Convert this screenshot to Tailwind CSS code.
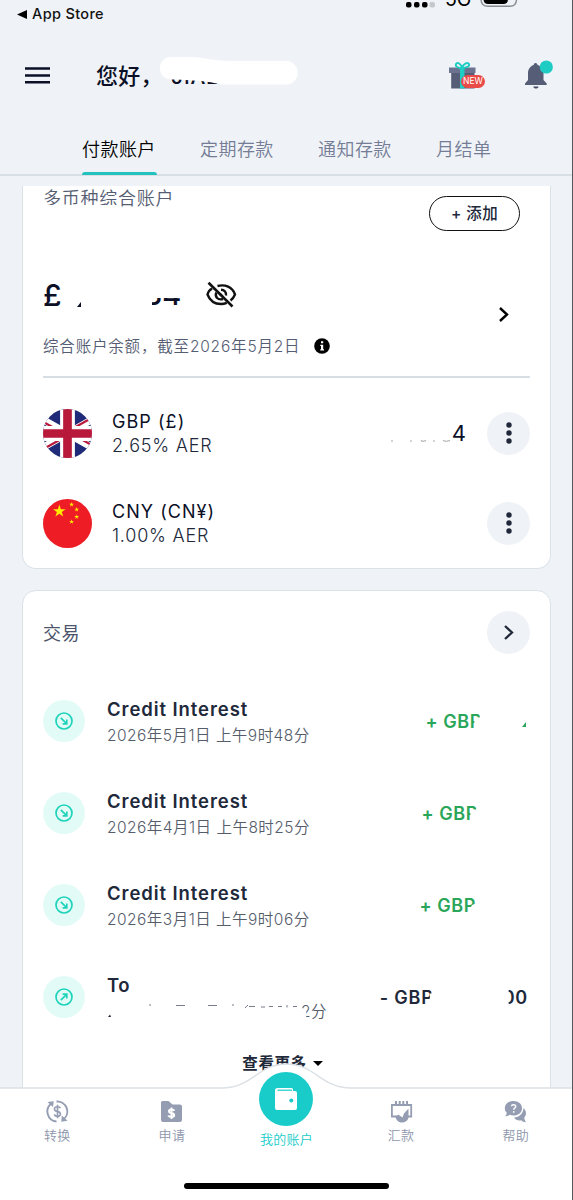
<!DOCTYPE html>
<html lang="zh-CN">
<head>
<meta charset="utf-8">
<title>我的账户</title>
<script src="https://cdn.jsdelivr.net/npm/@tailwindcss/browser@4"></script>
</head>
<body class="bg-[#eff3f7]">
<svg class="hidden">
  <defs>
    <symbol id="in" viewBox="0 0 18 18"><circle cx="9" cy="9" r="8" fill="none" stroke="#1fd3bb" stroke-width="1.7"/><path d="M5.800 5.800 11.400 11.400M11.800 7.600V11.800H7.600" fill="none" stroke="#1fd3bb" stroke-width="1.700"/></symbol>
    <symbol id="out" viewBox="0 0 18 18"><circle cx="9" cy="9" r="8" fill="none" stroke="#1fd3bb" stroke-width="1.700"/><path d="M5.800 12.200 11.400 6.600M7.600 6.200H11.800V10.400" fill="none" stroke="#1fd3bb" stroke-width="1.700"/></symbol>
    <symbol id="dots" viewBox="0 0 6 22"><circle cx="3" cy="3" r="2.700" fill="#20283a"/><circle cx="3" cy="11" r="2.700" fill="#20283a"/><circle cx="3" cy="19" r="2.700" fill="#20283a"/></symbol>
    <symbol id="star" viewBox="-1 -1 2 2"><path d="M0-1 .225-.309H.951L.363.118.588.809 0 .382-.588.809-.363.118-.951-.309H-.225Z" fill="#ffeb00"/></symbol>
  </defs>
</svg>
<div class="relative flex h-[1200px] w-[573px] flex-col overflow-hidden bg-[#eff3f7] font-['Inter','Noto_Sans_CJK_SC',sans-serif] text-[#20283a]">

  <header class="h-[176px] shrink-0 border-b-2 border-[#d8dfe5]">
    <div class="flex h-[28px] justify-between pl-[17px] pr-[54px]">
      <div class="flex h-[28px] items-center gap-[5px] text-[14.500px] font-medium tracking-[0.350px] text-[#111]">
        <svg class="h-[9px] w-[10px]" viewBox="0 0 10 9"><path d="M0 4.500 10 0V9Z" fill="#000"/></svg>
        <span>App Store</span>
      </div>
      <div class="flex h-[8px] items-start overflow-hidden">
        <svg class="mt-[1px] h-[7px] w-[30px]" viewBox="0 0 30 7"><rect x="1" y="1" width="5.500" height="5.500" rx="2"/><rect x="9" y="1" width="5.500" height="5.500" rx="2"/><rect x="17" y="1" width="5.500" height="5.500" rx="2"/><rect x="24.500" y="1" width="5.500" height="5.500" rx="2" fill="#c5c8cc"/></svg>
        <span class="-mt-[14px] ml-[10px] w-[27px] text-[19.500px] font-normal leading-[26px] text-black">5G</span>
        <svg class="ml-[8px] h-[8px] w-[39px]" viewBox="0 0 39 8"><path d="M1 -4V-1Q1 6.300 8 6.300H30Q36.500 6.300 36.500 -1V-4" fill="none" stroke="#888c91" stroke-width="1.400"/><path d="M3.500 -4V-1Q3.500 4 8 4H23.500Q28 4 28 -1V-4Z"/></svg>
      </div>
    </div>
    <div class="flex h-[97px] items-center pl-[25px] pr-[18px]">
      <svg class="-mt-[3px] h-[17px] w-[25px] shrink-0" viewBox="0 0 25 17"><path d="M0 1.500H25M0 8.500H25M0 15.300H25" stroke="#0b1027" stroke-width="2.500"/></svg>
      <div class="relative ml-[46px] flex w-[210px] items-center whitespace-nowrap text-[22px] font-medium tracking-[0.300px] text-[#0b1027]">
        <span>您好，</span>
        <span class="absolute left-[75px] top-[1px] text-[21px] tracking-[0.800px]">JIAL</span>
        <svg class="absolute left-[64px] -top-[3px] h-[28px] w-[138px]" viewBox="0 0 138 28"><path d="M11 0H32C48 1 54 4 70 4H126A11.700 11.700 0 0 1 126 27.500H62C50 25 40 23 11 22.500A11 11 0 0 1 11 0Z" fill="#fff"/></svg>
      </div>
      <div class="relative -mt-[3px] ml-auto flex">
        <svg class="h-[30px] w-[37px]" viewBox="0 0 37 30"><path d="M2.200 12H25.500V28.500H2.200Z" fill="#555d77"/><path d="M0 7.500H26.500V13H0Z" fill="#6b7390"/><path d="M11 8H15.500V28.500H11Z" fill="#1fccc4"/><path d="M13 8C9 8 6 6.500 7 4 8.500 1.500 12 4 13 8ZM13 8C17 8 21 6.500 20 4 18.500 1.500 14 4 13 8Z" fill="none" stroke="#1fccc4" stroke-width="1.900"/></svg>
        <span class="absolute left-[12px] top-[15px] flex h-[13px] w-[24px] items-center justify-center rounded-full bg-[#e94b48] text-[8.500px] tracking-[0.100px] text-white">NEW</span>
      </div>
      <svg class="-mt-[4px] ml-[39px] h-[30px] w-[30px]" viewBox="0 0 30 30"><path d="M10.500 3C11.500 3 12.500 3.800 12.500 5 17 6.300 18.500 9.500 18.500 13V20L21.700 23.500V25H0V23.500L3 20V13C3 9.500 5 6.300 8.700 5 8.700 3.800 9.500 3 10.500 3Z" fill="#555d77"/><path d="M8.300 26.500H13.500C13.200 29.300 8.700 29.300 8.300 26.500Z" fill="#434b65"/><circle cx="21.300" cy="7" r="6.600" fill="#1fccc4"/></svg>
    </div>
    <nav class="flex h-[50px] gap-[44px] pl-[82px] text-[18px] font-[350] tracking-[0.450px] text-[#747c96]">
      <div class="relative h-[50px] w-[74px] whitespace-nowrap leading-[50px] text-black">付款账户<div class="absolute bottom-0 left-0 h-[3px] w-[75px] rounded-t bg-[#22c3bf]"></div></div>
      <div class="w-[74px] whitespace-nowrap leading-[50px]">定期存款</div>
      <div class="w-[74px] whitespace-nowrap leading-[50px]">通知存款</div>
      <div class="whitespace-nowrap leading-[50px]">月结单</div>
    </nav>
  </header>

  <main class="h-[912px] shrink-0 overflow-hidden px-[22px] pt-[10px]">
    <section class="h-[383px] rounded-b-[14px] border border-t-0 border-[#dae2e8] bg-white px-[20px]">
      <div class="flex h-[44px] items-start justify-between">
        <div class="relative text-[18px] font-[350] leading-[26px] tracking-[0.750px] text-[#555d73]">多币种综合账户
          <div class="absolute left-0 top-[19px] h-[8px] w-[74px] bg-white"></div>
        </div>
        <div class="mr-[10px] mt-[10px] flex h-[35px] w-[91px] items-center justify-center rounded-full border-[1.500px] border-[#111] text-[15.500px] font-medium tracking-[0.400px]">+ 添加</div>
      </div>
      <div class="mt-[50px] flex justify-between">
        <div>
          <div class="flex h-[30px] items-center text-[30px] font-medium text-[#0b1027]">
            <span class="w-[34px] leading-[30px]">£</span>
            <svg class="mt-[19px] h-[5px] w-[5px]" viewBox="0 0 5 5"><path d="M0 5 4 0V5Z" fill="#0b1027"/></svg>
            <span class="ml-[62px] w-[42px] text-[29px] leading-[30px] [clip-path:inset(18px_0_0_8px)]">34</span>
            <svg class="ml-[20px] h-[28px] w-[31px]" viewBox="0 0 31 28"><g fill="none" stroke="#111" stroke-width="2.400"><path d="M6 7.500C3.500 9 2 11.500 1.500 13.500 4 20 9.500 23 15 23 17 23 19 22.600 20.800 21.900M11.500 5C19 3 26.500 6 29 13.500 28 16 26.500 18 24.500 19.500"/><path d="M10.300 11.500C8.500 16 12 19.500 17 18M15 8.700C18.500 8.800 20.500 11.500 20 14.500M13.500 12.500 16.500 15.500"/><path d="M2.500 1.800 26.500 25.500" stroke-width="2.600"/></g></svg>
          </div>
          <div class="mt-[24px] flex h-[24px] items-center text-[15.500px] font-[350] tracking-[0.820px] text-[#555d73]">
            <span class="w-[271px] whitespace-nowrap pt-[2px]">综合账户余额，截至2026年5月2日</span>
            <svg class="h-[16px] w-[16px]" viewBox="0 0 16 16"><circle cx="8" cy="8" r="7.800" fill="#000"/><path d="M7 3.200H9.200V5.200H7ZM6.300 6.700H9.200V11.300H10V12.500H6.300V11.300H7V7.900H6.300Z" fill="#fff"/></svg>
          </div>
        </div>
        <svg class="mr-[20px] mt-[26px] h-[17px] w-[12px]" viewBox="0 0 12 17"><path d="M2 2 9 8.500 2 15" fill="none" stroke="#000" stroke-width="2.400"/></svg>
      </div>
      <div class="mt-[18px] h-[2px] bg-[#d7dfe5]"></div>
      <div class="mt-[10px] flex h-[90px] items-center">
        <svg class="h-[49px] w-[49px]" viewBox="0 0 48 48"><clipPath id="c"><circle cx="24" cy="24" r="24"/></clipPath><g clip-path="url(#c)"><path fill="#1f2a78" d="M0 0H48V48H0Z"/><path d="M-8 6 56 42M56 6-8 42" stroke="#fff" stroke-width="7"/><path d="M-8 8 24 26M24 22 56 40M56 4 24 22M24 26-8 44" stroke="#b8193b" stroke-width="2.200"/><path d="M24 0V48M0 24H48" stroke="#fff" stroke-width="14.500"/><path d="M24 0V48M0 24H48" stroke="#b8193b" stroke-width="8.500"/></g></svg>
        <div class="ml-[20px] pt-[2px] text-[18px] leading-[24px] tracking-[1.050px]">
          <div class="font-normal text-[#0b1027]">GBP (£)</div>
          <div class="font-[350] tracking-[0.780px] text-[#20283a]">2.65% AER</div>
        </div>
        <div class="relative ml-auto w-[80px] text-right text-[22px] font-normal text-[#0b1027]">
          <svg class="absolute left-[4px] top-[22px] h-[4px] w-[64px]" viewBox="0 0 64 4"><path d="M1 2H3M20 2H22M31 1.500Q33 3 36 1.500M43 2H45M53 1.500Q56 3 60 1.500" fill="none" stroke="#aaa" stroke-width="1.200"/></svg>4</div>
        <div class="ml-[21px] flex h-[43px] w-[43px] items-center justify-center rounded-full bg-[#eff2f6]"><svg class="h-[22px] w-[6px]"><use href="#dots"/></svg></div>
      </div>
      <div class="flex h-[90px] items-center">
        <svg class="h-[49px] w-[49px]" viewBox="0 0 48 48"><circle cx="24" cy="24" r="24" fill="#ee1c25"/><use href="#star" x="9.500" y="5.500" width="13" height="13"/><use href="#star" x="25.500" y="3" width="5" height="5"/><use href="#star" x="30.500" y="7.800" width="5" height="5"/><use href="#star" x="30.500" y="15" width="5" height="5"/><use href="#star" x="25.500" y="19.800" width="5" height="5"/></svg>
        <div class="ml-[20px] pt-[2px] text-[18px] leading-[24px] tracking-[1.050px]">
          <div class="font-normal text-[#0b1027]">CNY (CN¥)</div>
          <div class="font-[350] tracking-[0.780px] text-[#20283a]">1.00% AER</div>
        </div>
        <div class="ml-auto flex h-[43px] w-[43px] items-center justify-center rounded-full bg-[#eff2f6]"><svg class="h-[22px] w-[6px]"><use href="#dots"/></svg></div>
      </div>
    </section>

    <section class="mt-[21px] h-[520px] rounded-t-[14px] border border-[#dae2e8] bg-white px-[20px] pt-[20px]">
      <div class="flex h-[43px] items-center justify-between text-[18px] font-normal tracking-[0.500px] text-[#4b546c]">
        <span class="pt-[2px]">交易</span>
        <div class="flex h-[43px] w-[43px] items-center justify-center rounded-full bg-[#eff2f6]"><svg class="h-[17px] w-[12px]" viewBox="0 0 12 17"><path d="M2 2 9 8.500 2 15" fill="none" stroke="#20283a" stroke-width="2.300"/></svg></div>
      </div>
      <div class="mt-[21px] flex h-[92px] items-center">
        <div class="flex h-[42px] w-[42px] items-center justify-center rounded-full bg-[#e3fbf7]"><svg class="h-[18px] w-[18px]"><use href="#in"/></svg></div>
        <div class="ml-[22px] whitespace-nowrap pt-[3px]"><div class="pb-[2px] text-[18.500px] font-semibold leading-[24px] tracking-[0.920px]">Credit Interest</div><div class="text-[15.500px] font-[350] leading-[26px] tracking-[0.480px] text-[#555d6b]">2026年5月1日 上午9时48分</div></div>
        <div class="ml-auto flex items-center text-[18px] font-semibold tracking-[0.600px] text-[#2aa65a]"><span class="[clip-path:polygon(0_0,96%_0,96%_37%,86.500%_37%,86.500%_100%,0_100%)]">+ GBP</span><svg class="ml-[40px] mr-[4px] mt-[7px] h-[5px] w-[4px]" viewBox="0 0 4 5"><path d="M0 5 4 0V5Z" fill="#2aa65a"/></svg></div>
      </div>
      <div class="flex h-[92px] items-center">
        <div class="flex h-[42px] w-[42px] items-center justify-center rounded-full bg-[#e3fbf7]"><svg class="h-[18px] w-[18px]"><use href="#in"/></svg></div>
        <div class="ml-[22px] whitespace-nowrap pt-[3px]"><div class="pb-[2px] text-[18.500px] font-semibold leading-[24px] tracking-[0.920px]">Credit Interest</div><div class="text-[15.500px] font-[350] leading-[26px] tracking-[0.480px] text-[#555d6b]">2026年4月1日 上午8时25分</div></div>
        <div class="ml-auto mr-[52px] text-[18px] font-semibold tracking-[0.600px] text-[#2aa65a]"><span class="inline-block [clip-path:polygon(0_0,97%_0,97%_37%,86.500%_37%,86.500%_100%,0_100%)]">+ GBP</span></div>
      </div>
      <div class="flex h-[92px] items-center">
        <div class="flex h-[42px] w-[42px] items-center justify-center rounded-full bg-[#e3fbf7]"><svg class="h-[18px] w-[18px]"><use href="#in"/></svg></div>
        <div class="ml-[22px] whitespace-nowrap pt-[3px]"><div class="pb-[2px] text-[18.500px] font-semibold leading-[24px] tracking-[0.920px]">Credit Interest</div><div class="text-[15.500px] font-[350] leading-[26px] tracking-[0.480px] text-[#555d6b]">2026年3月1日 上午9时06分</div></div>
        <div class="ml-auto mr-[54px] text-[18px] font-semibold tracking-[0.600px] text-[#2aa65a]"><span class="inline-block [clip-path:polygon(0_0,100%_0,100%_44%,93%_50%,90%_62%,86.500%_70%,86.500%_100%,0_100%)]">+ GBP</span></div>
      </div>
      <div class="flex h-[92px] items-center">
        <div class="flex h-[42px] w-[42px] items-center justify-center rounded-full bg-[#e3fbf7]"><svg class="h-[18px] w-[18px]"><use href="#out"/></svg></div>
        <div class="ml-[22px] whitespace-nowrap pt-[3px]"><div class="pb-[2px] text-[18.500px] font-semibold leading-[24px] tracking-[0.500px]">To</div>
          <div class="relative h-[26px] w-[220px] text-right text-[15.500px] font-[350] leading-[26px] tracking-[0.480px] text-[#555d6b]"><span class="inline-block [clip-path:polygon(0_0,100%_0,100%_100%,20%_100%,20%_42%,0_42%)]">2分</span>
            <svg class="absolute left-0 top-[3px] h-[16px] w-[200px]" viewBox="0 0 200 16"><path d="M1 15 3 12.500 4 15Z" fill="#20283a"/><path d="M42 3H44M69 3.500H78M101 3.500H110M125 3H127M138 6 141 3M142 4.500H148M154 5H158M162 4.500H166M171 4.500H175M180 3V5.500M186 4.500H190" fill="none" stroke="#777d8a" stroke-width="1"/></svg></div></div>
        <div class="ml-auto mr-[2px] flex text-[18px] font-semibold tracking-[0.800px]"><span class="[clip-path:polygon(0_0,96%_0,96%_37%,93%_37%,93%_58%,86%_58%,86%_100%,0_100%)]">- GBP</span><span class="ml-[69px] [clip-path:inset(0_0_0_6px)]">00</span></div>
      </div>
      <div class="flex h-[38px] items-center justify-center gap-[6px] pr-[8px] pt-[3px] text-[15.500px] font-bold tracking-[0.600px]"><span>查看更多</span><svg class="h-[5px] w-[10px]" viewBox="0 0 10 5"><path d="M0 0H10L5 5Z" fill="#000"/></svg></div>
    </section>
  </main>

  <footer class="relative h-[112px] shrink-0 bg-white">
    <svg class="absolute left-0 -top-[26px] h-[28px] w-[573px]" viewBox="0 0 573 28"><path d="M0 26H222C252 26 258 2 286.500 2S321 26 351 26H573V28H0Z" fill="#fff"/><path d="M0 26H222C252 26 258 2 286.500 2S321 26 351 26H573" fill="none" stroke="#dce1e5" stroke-width="1.500"/></svg>
    <div class="relative grid grid-cols-5 text-center text-[13px] font-[350] tracking-[0.300px] text-[#8e96ab]">
      <div class="flex flex-col items-center pt-[12px]">
        <svg class="h-[23px] w-[23px]" viewBox="0 0 23 23"><g fill="none" stroke="#959db2" stroke-width="1.900"><path d="M5.500 3.500A10 10 0 0 0 10.500 21.500M17.500 19.300A10 10 0 0 0 10.500 1.500"/></g><path d="M1.500 2 7.700 1.200 7 7ZM21.500 20.700 15.300 21.700 15.800 15.500Z" fill="#959db2"/><path d="M14.500 8.200C13.800 7 12.800 6.700 11.500 6.700 7.500 6.700 7.500 10.800 11 11.400 15.500 12 15.500 16.300 11.500 16.300 9.800 16.300 8.800 15.600 8.200 14.500M11.500 4.800V18.300" fill="none" stroke="#959db2" stroke-width="1.600"/></svg>
        <span class="mt-[2px] leading-[20px]">转换</span>
      </div>
      <div class="flex flex-col items-center pt-[12px]">
        <svg class="h-[23px] w-[23px]" viewBox="0 0 23 23"><path d="M2.500 1H8.500L12.500 4.500H20A2 2 0 0 1 22 6.500V20A2 2 0 0 1 20 22H3A2 2 0 0 1 1 20V2.500A1.500 1.500 0 0 1 2.500 1Z" fill="#959db2"/><path d="M14.500 10.700C13.800 9.700 12.800 9.400 11.500 9.400 8.200 9.400 8.200 12.700 11.300 13.100 15.200 13.600 15 17 11.500 17 10 17 9 16.600 8.300 15.500M11.500 7.500V19" fill="none" stroke="#fff" stroke-width="2"/></svg>
        <span class="mt-[2px] leading-[20px]">申请</span>
      </div>
      <div class="-mt-[16px] flex flex-col items-center">
        <div class="flex h-[54px] w-[54px] items-center justify-center rounded-full bg-[#19ccca]"><svg class="h-[22px] w-[22px]" viewBox="0 0 22 22"><path d="M2.500 0H16.500A1.500 1.500 0 0 1 18 1.500V3H20A2 2 0 0 1 22 5V20A2 2 0 0 1 20 22H2A2 2 0 0 1 0 20V2.500A2.500 2.500 0 0 1 2.500 0Z" fill="#fff"/><path d="M2.500 2.200H17" stroke="#19ccca" stroke-width="1.200"/><circle cx="16.300" cy="12.500" r="2" fill="#19ccca"/></svg></div>
        <span class="mt-[3px] leading-[20px] text-[#19ccca]">我的账户</span>
      </div>
      <div class="flex flex-col items-center pt-[12px]">
        <svg class="h-[23px] w-[23px]" viewBox="0 0 23 23"><path d="M5 4.800H1.900V16.500H6M17 16.500H21.200V4.800H17" fill="none" stroke="#959db2" stroke-width="1.800"/><path d="M5 1H7V5H5ZM8.700 1H10.700V5H8.700ZM12.300 1H14.300V5H12.300ZM16 1H18V5H16ZM3 4H20V6H3ZM5 16 8.500 14.800 12.500 17.500 14 13.500 18.500 8.500V17C18.500 20 15.500 22.500 12 22.500 8.500 22.500 6.500 20.500 5 16Z" fill="#959db2"/></svg>
        <span class="mt-[2px] leading-[20px]">汇款</span>
      </div>
      <div class="flex flex-col items-center pt-[12px]">
        <svg class="h-[23px] w-[23px]" viewBox="0 0 23 23"><path d="M9.500 1C14.500 1 18 4 18 8.200S14.500 15.500 9.500 15.500C8 15.500 6.800 15.200 5.800 14.800 4.500 15.900 3 16.300 1.200 16.200 2.300 15 2.700 14 2.700 12.800 1.500 11.500 .8 10 .8 8.200 .8 4 4.500 1 9.500 1ZM19.500 8C22.500 10.500 22.800 15 20.300 17.500 20.300 19.500 21 20.800 22.200 22.200 20 22.200 18.300 21.500 17 20.300 14 21 11.500 19.800 10 17.500 15 17.500 19.300 13.500 19.500 8Z" fill="#959db2"/><path d="M7.500 6.300C7.700 4 12 4.100 11.700 6.700 11.500 8 9.700 8.200 9.700 9.700M9.700 11V12.700" fill="none" stroke="#fff" stroke-width="1.500"/></svg>
        <span class="mt-[2px] leading-[20px]">帮助</span>
      </div>
    </div>
    <div class="absolute bottom-[11px] left-[184px] h-[6px] w-[205px] rounded-full bg-black"></div>
  </footer>
  <div class="absolute right-0 top-0 h-[1200px] w-px bg-[#55585c]"></div>
</div>
</body>
</html>
